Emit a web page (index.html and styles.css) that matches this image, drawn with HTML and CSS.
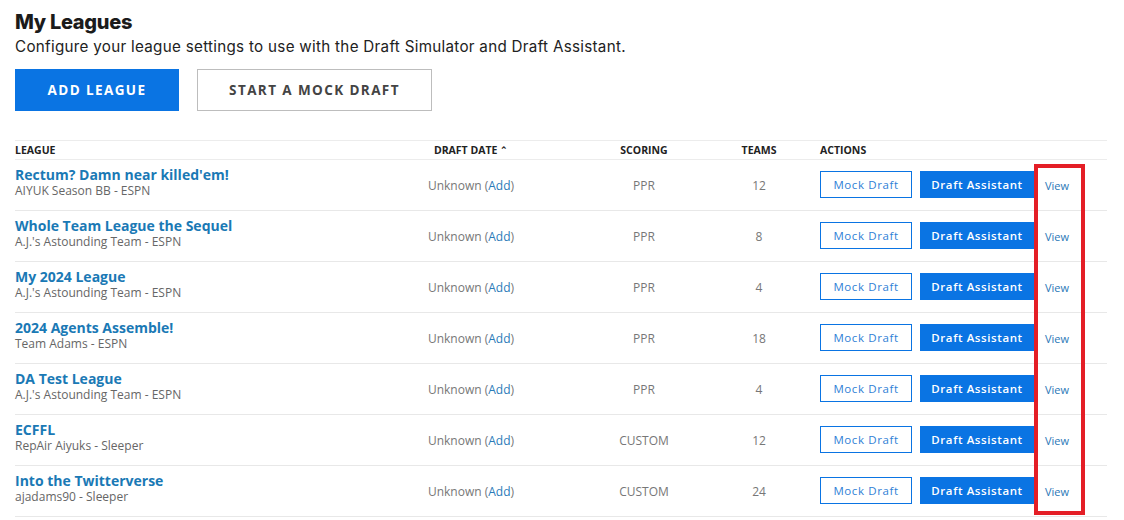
FILE: index.html
```html
<!DOCTYPE html>
<html>
<head>
<meta charset="utf-8">
<link rel="stylesheet" href="styles.css">
</head>
<body>
<div class="page">
  <h1 class="title">My Leagues</h1>
  <p class="subtitle">Configure your league settings to use with the Draft Simulator and Draft Assistant.</p>
  <div class="top-actions">
    <button class="btn btn-primary">ADD LEAGUE</button>
    <button class="btn btn-outline">START A MOCK DRAFT</button>
  </div>
  <div class="table-wrap">
    <table class="leagues">
      <colgroup>
        <col class="c-league"><col class="c-date"><col class="c-scoring"><col class="c-teams"><col class="c-actions">
      </colgroup>
      <thead>
        <tr>
          <th class="left">LEAGUE</th>
          <th>DRAFT DATE <span class="caret">&#8963;</span></th>
          <th>SCORING</th>
          <th>TEAMS</th>
          <th class="left act-h">ACTIONS</th>
        </tr>
      </thead>
      <tbody>
        <tr>
          <td class="left"><a class="lname">Rectum? Damn near killed'em!</a><div class="lsub">AIYUK Season BB - ESPN</div></td>
          <td class="muted">Unknown (<a class="link">Add</a>)</td>
          <td class="muted">PPR</td>
          <td class="muted">12</td>
          <td class="actions"><div class="act"><button class="mini mini-outline">Mock Draft</button><button class="mini mini-solid">Draft Assistant</button><a class="view">View</a></div></td>
        </tr>
        <tr>
          <td class="left"><a class="lname">Whole Team League the Sequel</a><div class="lsub">A.J.'s Astounding Team - ESPN</div></td>
          <td class="muted">Unknown (<a class="link">Add</a>)</td>
          <td class="muted">PPR</td>
          <td class="muted">8</td>
          <td class="actions"><div class="act"><button class="mini mini-outline">Mock Draft</button><button class="mini mini-solid">Draft Assistant</button><a class="view">View</a></div></td>
        </tr>
        <tr>
          <td class="left"><a class="lname">My 2024 League</a><div class="lsub">A.J.'s Astounding Team - ESPN</div></td>
          <td class="muted">Unknown (<a class="link">Add</a>)</td>
          <td class="muted">PPR</td>
          <td class="muted">4</td>
          <td class="actions"><div class="act"><button class="mini mini-outline">Mock Draft</button><button class="mini mini-solid">Draft Assistant</button><a class="view">View</a></div></td>
        </tr>
        <tr>
          <td class="left"><a class="lname">2024 Agents Assemble!</a><div class="lsub">Team Adams - ESPN</div></td>
          <td class="muted">Unknown (<a class="link">Add</a>)</td>
          <td class="muted">PPR</td>
          <td class="muted">18</td>
          <td class="actions"><div class="act"><button class="mini mini-outline">Mock Draft</button><button class="mini mini-solid">Draft Assistant</button><a class="view">View</a></div></td>
        </tr>
        <tr>
          <td class="left"><a class="lname">DA Test League</a><div class="lsub">A.J.'s Astounding Team - ESPN</div></td>
          <td class="muted">Unknown (<a class="link">Add</a>)</td>
          <td class="muted">PPR</td>
          <td class="muted">4</td>
          <td class="actions"><div class="act"><button class="mini mini-outline">Mock Draft</button><button class="mini mini-solid">Draft Assistant</button><a class="view">View</a></div></td>
        </tr>
        <tr>
          <td class="left"><a class="lname">ECFFL</a><div class="lsub">RepAir Aiyuks - Sleeper</div></td>
          <td class="muted">Unknown (<a class="link">Add</a>)</td>
          <td class="muted">CUSTOM</td>
          <td class="muted">12</td>
          <td class="actions"><div class="act"><button class="mini mini-outline">Mock Draft</button><button class="mini mini-solid">Draft Assistant</button><a class="view">View</a></div></td>
        </tr>
        <tr>
          <td class="left"><a class="lname">Into the Twitterverse</a><div class="lsub">ajadams90 - Sleeper</div></td>
          <td class="muted">Unknown (<a class="link">Add</a>)</td>
          <td class="muted">CUSTOM</td>
          <td class="muted">24</td>
          <td class="actions"><div class="act"><button class="mini mini-outline">Mock Draft</button><button class="mini mini-solid">Draft Assistant</button><a class="view">View</a></div></td>
        </tr>
      </tbody>
    </table>
    <div class="highlight"></div>
  </div>
</div>
</body>
</html>
```

FILE: styles.css
```css
* { box-sizing: border-box; }
html, body { margin: 0; padding: 0; background: #fff; }
body { font-family: "Open Sans", "Liberation Sans", sans-serif; color: #222; }

.page { padding: 9px 17px 0 15px; }

.title {
  margin: 0;
  font-family: Inter, "Noto Sans", sans-serif;
  font-weight: 800;
  font-size: 20px;
  line-height: 26px;
  letter-spacing: -0.3px;
  color: #1b1b1b;
}
.subtitle {
  margin: 2px 0 0;
  font-family: Inter, "Noto Sans", sans-serif;
  font-size: 15.2px;
  line-height: 20px;
  letter-spacing: 0.29px;
  color: #222;
}

.top-actions { display: flex; gap: 18px; margin-top: 12px; }
.btn {
  height: 42px;
  font-family: "Open Sans", sans-serif;
  font-weight: 700;
  font-size: 13.5px;
  letter-spacing: 1.4px;
  cursor: pointer;
}
.btn-primary { width: 164px; background: #0a74e3; border: 0; color: #fff; }
.btn-outline { width: 235px; background: #fff; border: 1px solid #bdbdbd; color: #444; }

.table-wrap { position: relative; margin-top: 29px; }
.leagues { width: 100%; border-collapse: collapse; table-layout: fixed; }
.c-league { width: 380px; }
.c-date { width: 152px; }
.c-scoring { width: 194px; }
.c-teams { width: 36px; }

.leagues th {
  height: 19px;
  padding: 0;
  font-size: 10.5px;
  font-weight: 700;
  color: #222;
  text-align: center;
  white-space: nowrap;
  border-top: 1px solid #ececec;
  border-bottom: 1px solid #ececec;
}
.leagues th.left, .leagues td.left { text-align: left; }
.leagues th.act-h { padding-left: 43px; }
.caret { font-size: 9px; font-weight: 900; position: relative; top: -1px; }

.leagues td {
  height: 51px;
  padding: 0;
  text-align: center;
  vertical-align: middle;
  border-bottom: 1px solid #e8e8e8;
  white-space: nowrap;
}
.leagues td.left { vertical-align: top; padding-top: 6px; }
.lname {
  display: block;
  font-size: 14px;
  font-weight: 700;
  line-height: 18px;
  color: #1a79b5;
}
.lsub { font-size: 12px; line-height: 14px; color: #666; }
.muted { font-size: 12px; color: #777; }
.link { color: #2b7bb9; }

.actions { padding-left: 43px !important; }
.act { display: flex; align-items: center; margin-top: -1px; }
.mini {
  height: 27px;
  font-family: "Open Sans", sans-serif;
  font-size: 11.5px;
  letter-spacing: 0.6px;
  cursor: pointer;
}
.mini-outline { width: 92px; background: #fff; border: 1px solid #0a74e3; color: #2f7fd6; }
.mini-solid { width: 114px; margin-left: 8px; background: #0a74e3; border: 0; color: #fff; font-weight: 600; letter-spacing: 0.6px; }
.view { margin-left: 11px; font-size: 11px; color: #2c77b7; margin-top: 2px; }

.highlight {
  position: absolute;
  left: 1019px;
  top: 24px;
  width: 51px;
  height: 351px;
  border: 4px solid #e41e26;
  pointer-events: none;
}
```
